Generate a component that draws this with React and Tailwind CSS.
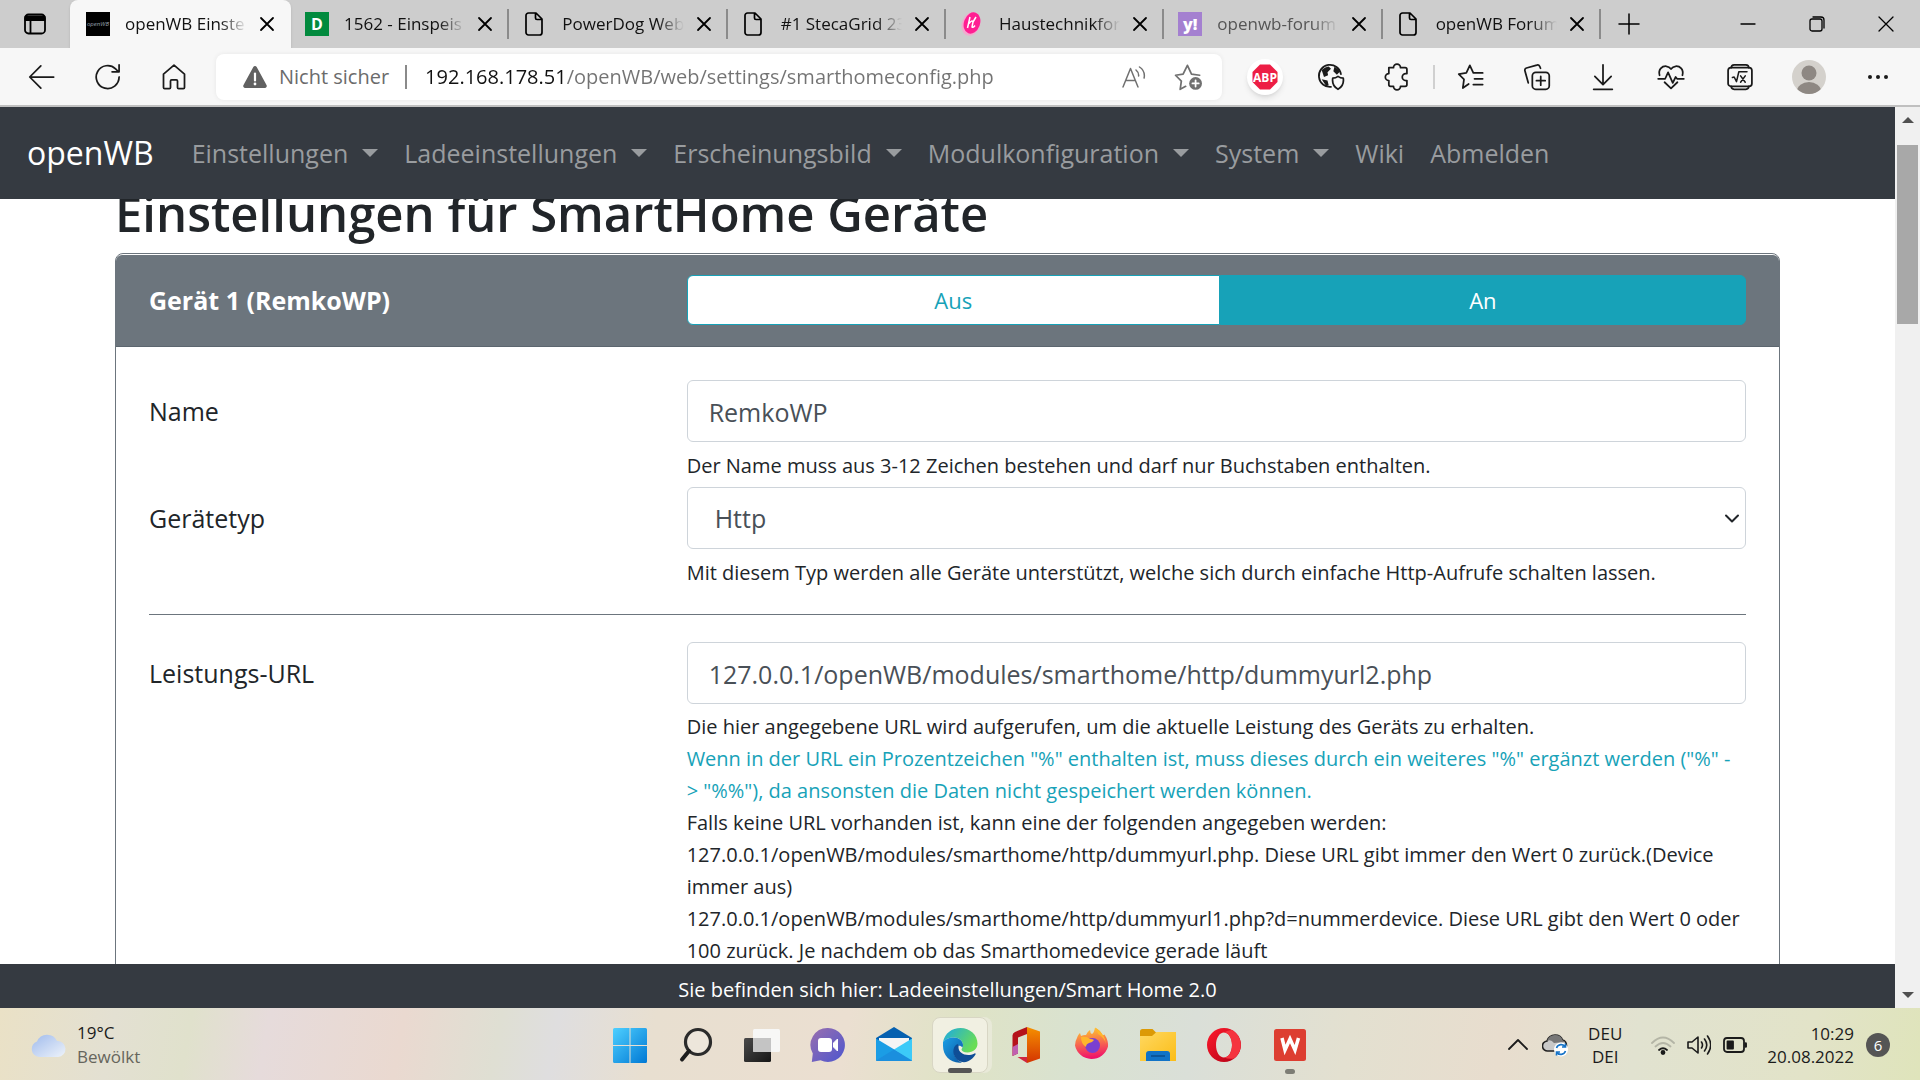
import React, { useState } from 'react';

const tabs = [
  { title: 'openWB Einste', icon: 'openwb', active: true },
  { title: '1562 - Einspeis', icon: 'd' },
  { title: 'PowerDog Web', icon: 'page' },
  { title: '#1 StecaGrid 23', icon: 'page' },
  { title: 'Haustechnikfor', icon: 'haus' },
  { title: 'openwb-forum', icon: 'yahoo', dim: true },
  { title: 'openWB Forum', icon: 'page' },
];

const navItems = [
  { label: 'Einstellungen', dropdown: true },
  { label: 'Ladeeinstellungen', dropdown: true },
  { label: 'Erscheinungsbild', dropdown: true },
  { label: 'Modulkonfiguration', dropdown: true },
  { label: 'System', dropdown: true },
  { label: 'Wiki' },
  { label: 'Abmelden' },
];

function Icon({ children, className = 'size-6', width = 1.5, viewBox = '0 0 24 24' }) {
  return (
    <svg className={className} viewBox={viewBox} fill="none" stroke="currentColor" strokeWidth={width} strokeLinecap="round" strokeLinejoin="round" aria-hidden="true">
      {children}
    </svg>
  );
}

function Favicon({ icon }) {
  if (icon === 'openwb') {
    return (
      <span className="flex size-6 shrink-0 items-center justify-center bg-black text-[6px] text-gray-400 italic">openWB</span>
    );
  }
  if (icon === 'd') {
    return <span className="flex size-6 shrink-0 items-center justify-center bg-[#028a3e] text-base font-bold text-white">D</span>;
  }
  if (icon === 'yahoo') {
    return <span className="flex size-6 shrink-0 items-center justify-center bg-[#a480d0] text-base font-extrabold text-white">y!</span>;
  }
  if (icon === 'haus') {
    return (
      <svg className="size-6 shrink-0" viewBox="0 0 24 24" aria-hidden="true">
        <ellipse cx="11" cy="12" rx="9" ry="12" fill="#f4a9cf" transform="rotate(20 11 12)" />
        <ellipse cx="12" cy="11" rx="8" ry="11" fill="#ff1f92" transform="rotate(20 12 11)" />
        <path d="M10 5 7.500 16M9 11.500q3-4 4-1.500l-1 5q1 1 3-1.500M16 5l-3 5" stroke="#fff" strokeWidth="1.500" fill="none" />
      </svg>
    );
  }
  return (
    <Icon className="size-6 shrink-0" width={1.7}>
      <path d="M5.500 1h7.500l6 6v13.500a2.500 2.500 0 0 1-2.500 2.500h-11A2.500 2.500 0 0 1 3 20.500v-17A2.500 2.500 0 0 1 5.500 1ZM12.500 1.200V6A1.500 1.500 0 0 0 14 7.500h5" />
    </Icon>
  );
}

function TabStrip() {
  return (
    <div className="flex h-12 items-center bg-[#cdcdcd]">
      <button type="button" aria-label="Tabaktionen" className="flex h-12 w-[70px] shrink-0 items-center justify-center">
        <Icon className="size-6" width={1.8}>
          <rect x="2" y="2.500" width="20" height="19" rx="3.500" />
          <path d="M2.500 4.500h19v3.500h-19z" fill="currentColor" />
          <path d="M7.500 8v13" />
        </Icon>
      </button>
      <div className="flex max-w-[1531px] flex-1 items-center">
        {tabs.map((tab) => (
          <div
            key={tab.title}
            className={
              tab.active
                ? 'flex h-12 w-[221px] shrink-0 items-center rounded-t-lg bg-[#f7f7f7] pr-3 pl-4 shadow-sm'
                : 'flex h-[30px] min-w-0 flex-1 items-center border-r-2 border-[#8b8b8b] pr-[10px] pl-[14px]'
            }
          >
            <Favicon icon={tab.icon} />
            <span
              className={
                (tab.dim ? 'text-[#555]' : 'text-[#111]') +
                ' ml-[15px] min-w-0 flex-1 text-[17px] leading-6 whitespace-nowrap [mask-image:linear-gradient(to_right,black_78%,transparent)]'
              }
            >
              {tab.title}
            </span>
            <button type="button" aria-label={tab.title + ' schließen'} className="ml-2 flex size-6 shrink-0 items-center justify-center">
              <Icon className="size-6" width={1.8}>
                <path d="m6 6 12 12M18 6 6 18" />
              </Icon>
            </button>
          </div>
        ))}
      </div>
      <button type="button" aria-label="Neuer Tab" className="flex h-12 w-14 shrink-0 items-center justify-center">
        <Icon className="size-6">
          <path d="M2 12h20M12 2v20" />
        </Icon>
      </button>
      <div className="ml-auto flex h-full items-center">
        <button type="button" aria-label="Minimieren" className="flex w-[69px] justify-center">
          <Icon className="size-4" width={1.3} viewBox="0 0 16 16"><path d="M1 8h14" /></Icon>
        </button>
        <button type="button" aria-label="Verkleinern" className="flex w-[69px] justify-center">
          <Icon className="size-4" width={1.3} viewBox="0 0 16 16">
            <rect x="1" y="3" width="12" height="12" rx="2" />
            <path d="M4 1h8a3 3 0 0 1 3 3v8" />
          </Icon>
        </button>
        <button type="button" aria-label="Schließen" className="flex w-[69px] justify-center">
          <Icon className="size-4" width={1.3} viewBox="0 0 16 16"><path d="m1 1 14 14M15 1 1 15" /></Icon>
        </button>
      </div>
    </div>
  );
}

function ToolButton({ label, children, className = 'w-[66px]' }) {
  return (
    <button type="button" aria-label={label} className={className + ' flex shrink-0 items-center justify-center'}>
      {children}
    </button>
  );
}

function AddressRow() {
  const [url, setUrl] = useState('192.168.178.51/openWB/web/settings/smarthomeconfig.php');

  return (
    <div className="flex h-[59px] items-center border-b-2 border-[#c0c0c0] bg-[#f7f7f7] px-2 text-[#1a1a1a]">
      <ToolButton label="Zurück" className="w-[67px]">
        <Icon className="size-7"><path d="M22 12H2M11 2.500 1.500 12l9.500 9.500" /></Icon>
      </ToolButton>
      <ToolButton label="Aktualisieren">
        <Icon className="size-7"><path d="M21.500 12A9.800 9.800 0 1 1 18.500 5L21 7.500M21.500 1.500v6h-6" /></Icon>
      </ToolButton>
      <ToolButton label="Startseite">
        <Icon className="size-7"><path d="M3 9.500 12 1.800l9 7.700V21a1 1 0 0 1-1 1h-4a1 1 0 0 1-1-1v-5.500a1 1 0 0 0-1-1h-4a1 1 0 0 0-1 1V21a1 1 0 0 1-1 1H4a1 1 0 0 1-1-1Z" /></Icon>
      </ToolButton>

      <div className="ml-[9px] flex h-[46px] flex-1 items-center rounded-lg bg-white pr-5 pl-[26px] shadow-[0_0_5px_rgba(0,0,0,0.07)]">
        <svg className="h-6 w-[26px]" viewBox="0 0 26 24" aria-hidden="true">
          <path d="M11.300 2a2 2 0 0 1 3.400 0l9.800 18a2 2 0 0 1-1.700 3H3.200a2 2 0 0 1-1.700-3Z" fill="#616161" />
          <path d="M13 8.500v7" stroke="#fff" strokeWidth="2.200" strokeLinecap="round" />
          <circle cx="13" cy="19" r="1.400" fill="#fff" />
        </svg>
        <span className="ml-[11px] text-xl text-[#6b6b6b]">Nicht sicher</span>
        <span className="mr-[18px] ml-4 h-6 w-[2px] bg-[#8a8a8a]" />
        <input
          aria-label="Adresse"
          value={url}
          onChange={(e) => setUrl(e.target.value)}
          className="flex-1 bg-linear-to-r from-[#111] from-[138px] to-[#737373] to-[138px] bg-clip-text text-xl text-transparent outline-none"
        />
        <div className="flex items-center gap-7 text-[#707070]">
          <button type="button" aria-label="Laut vorlesen">
            <Icon className="size-6"><path d="M1 22 8.500 3.500 16 22M3.800 15.500h9.400M14 5q3 2.500 2.600 6M17.500 2q6 4 4.600 11" /></Icon>
          </button>
          <button type="button" aria-label="Zu Favoriten hinzufügen">
            <Icon className="size-7">
              <path d="m10 20-4.700 2.500 1-7L1.300 10.500l6.500-1L11.500 2l3.500 7.500 7 1" />
              <circle cx="18.500" cy="17.500" r="5.500" fill="currentColor" stroke="none" />
              <path d="M18.500 14.800v5.400M15.800 17.500h5.400" stroke="#fff" />
            </Icon>
          </button>
        </div>
      </div>

      <ToolButton label="Adblock Plus" className="ml-[10px] w-[66px]">
        <span className="flex size-9 items-center justify-center rounded-full bg-white shadow-md">
          <svg className="size-7" viewBox="0 0 28 28" aria-hidden="true">
            <path d="M9 1.500h10L26.500 9v10L19 26.500H9L1.500 19V9Z" fill="#ed1e45" />
            <text x="14" y="18.500" textAnchor="middle" fontSize="12" fontWeight="700" fill="#fff">ABP</text>
          </svg>
        </span>
      </ToolButton>
      <ToolButton label="Datenschutz">
        <Icon className="size-7">
          <path d="M12 20.500a9.500 9.500 0 1 1 8.500-11" />
          <path d="M4 6q3-3 6-3l2 2-3 3 .5 2.500L6 12ZM15 3l5 4-3 3-3-3ZM4 14l5 1 1 4-2 1Z" fill="currentColor" stroke="none" />
          <path d="M18 11.500q2 1.500 4.500 1.500 1 6.500-4.500 9.500-5.500-3-4.500-9.500 2.500 0 4.500-1.500Z" fill="#f7f7f7" />
        </Icon>
      </ToolButton>
      <ToolButton label="Erweiterungen">
        <Icon className="size-7"><path d="M5 4h4a3 3 0 0 1 6 0h4a1.500 1.500 0 0 1 1.500 1.500V9h-1a3 3 0 0 0 0 6h1v3.500A1.500 1.500 0 0 1 19 20h-4a3 3 0 0 1-6 0H6.500A1.500 1.500 0 0 1 5 18.500V15a3 3 0 0 1 0-6Z" /></Icon>
      </ToolButton>
      <span className="mx-[3px] h-6 w-[2px] bg-[#d0d0d0]" />
      <ToolButton label="Favoriten">
        <Icon className="size-7"><path d="m10 18-5 3.500 1-7.500L1.500 9.500 8 8.500 11 2l3 6.500h8M15 13.500h7M14 18.500h8" /></Icon>
      </ToolButton>
      <ToolButton label="Sammlungen">
        <Icon className="size-7">
          <rect x="8" y="8" width="14.500" height="14.500" rx="3" />
          <path d="M15.200 11.500v7.500M11.500 15.200H19M15 4.500l-.7-1.700a2 2 0 0 0-2.500-1L3 4.300a2 2 0 0 0-1.300 2.600L4.500 17" />
        </Icon>
      </ToolButton>
      <ToolButton label="Downloads">
        <Icon className="size-7"><path d="M12 1.500V18M5 11.500l7 7 7-7M4 22.500h16" /></Icon>
      </ToolButton>
      <ToolButton label="Leistung" className="w-[69px]">
        <Icon className="size-7">
          <path d="M2.200 10.500C.8 5.500 4.500 2.500 8 2.800q2.500.2 4 2.400 1.500-2.200 4-2.400c3.500-.3 7.200 2.700 5.800 7.700M6.500 16.500l5.500 5.300 5.500-5.300" />
          <path d="M1 13.500h6l2.500-5.500 4 9 2.500-5 1.200 1.500H23" />
        </Icon>
      </ToolButton>
      <ToolButton label="Mathematik" className="w-[69px]">
        <Icon className="size-7">
          <rect x="1.800" y="4" width="20.400" height="16" rx="2.500" />
          <path d="M4.500 4q0-2.500 2.500-2.500h10Q19.500 1.500 19.500 4M4.500 20q0 2.500 2.500 2.500h10q2.500 0 2.500-2.500" />
          <path d="m5.500 12.500 1.500-.5 2 4 2-8.500h7M12.500 11l4 5.500M16.500 11l-4 5.500" strokeWidth="1.300" />
        </Icon>
      </ToolButton>
      <ToolButton label="Profil" className="w-[69px]">
        <svg className="size-[34px]" viewBox="0 0 34 34" aria-hidden="true">
          <clipPath id="avatar"><circle cx="17" cy="17" r="17" /></clipPath>
          <g clipPath="url(#avatar)">
            <rect width="34" height="34" fill="#d4d1cc" />
            <circle cx="17" cy="13" r="7.500" fill="#8e8883" />
            <ellipse cx="17" cy="31" rx="12" ry="9" fill="#8e8883" />
          </g>
        </svg>
      </ToolButton>
      <ToolButton label="Einstellungen und mehr" className="w-[69px]">
        <svg className="size-6" viewBox="0 0 24 24" fill="currentColor" aria-hidden="true">
          <circle cx="4" cy="12" r="2" />
          <circle cx="12" cy="12" r="2" />
          <circle cx="20" cy="12" r="2" />
        </svg>
      </ToolButton>
    </div>
  );
}

function Navbar() {
  return (
    <nav className="z-10 flex h-[92px] shrink-0 items-center bg-[#353a41] px-[27px] text-[#999c9f]">
      <a href="#home" className="mr-[38px] text-[32px] leading-10 text-white">openWB</a>
      <div className="flex items-center gap-[26px]">
        {navItems.map((item) => (
          <a key={item.label} href={'#' + item.label} className="flex items-center text-[25px] leading-9">
            {item.label}
            {item.dropdown && (
              <span className="ml-[14px] border-x-8 border-t-8 border-x-transparent border-t-[#999c9f]" />
            )}
          </a>
        ))}
      </div>
    </nav>
  );
}

const inputClass = 'h-[62px] w-full rounded-md border border-[#ced4da] bg-white pt-0.5 text-[25px] text-[#495057] outline-none';

function FormRow({ id, label, children }) {
  return (
    <div className="grid grid-cols-[1fr_2fr] gap-x-2">
      <label htmlFor={id} className="pt-[11px] text-[25px] leading-10">{label}</label>
      <div>{children}</div>
    </div>
  );
}

function DeviceCard() {
  const [enabled, setEnabled] = useState('an');
  const [name, setName] = useState('RemkoWP');
  const [type, setType] = useState('http');
  const [powerUrl, setPowerUrl] = useState('127.0.0.1/openWB/modules/smarthome/http/dummyurl2.php');

  return (
    <section className="rounded-lg border border-[#6c757d] pt-px">
      <header className="grid h-[92px] grid-cols-[1fr_2fr] items-center gap-x-2 rounded-t-md border-b border-[#5c666f] bg-[#6c757d] px-[33px] pb-0.5 text-white">
        <h2 className="text-[25px] leading-9 font-bold">Gerät 1 (RemkoWP)</h2>
        <fieldset className="flex h-[50px] text-[22px] leading-8" aria-label="Gerät 1">
          <label className="flex flex-[534] items-center justify-center rounded-l-md border border-[#17a2b8] bg-white text-[#17a2b8] has-checked:bg-[#17a2b8] has-checked:text-white">
            <input type="radio" name="enabled" className="sr-only" checked={enabled === 'aus'} onChange={() => setEnabled('aus')} />
            Aus
          </label>
          <label className="flex flex-[527] items-center justify-center rounded-r-md border border-[#17a2b8] bg-white text-[#17a2b8] has-checked:bg-[#17a2b8] has-checked:text-white">
            <input type="radio" name="enabled" className="sr-only" checked={enabled === 'an'} onChange={() => setEnabled('an')} />
            An
          </label>
        </fieldset>
      </header>

      <form className="px-[33px] py-[33px] text-[#212529]">
        <FormRow id="device-name" label="Name">
          <input id="device-name" type="text" value={name} onChange={(e) => setName(e.target.value)} className={inputClass + ' px-[21px]'} />
          <p className="mt-2 mb-[5px] text-xl leading-8">Der Name muss aus 3-12 Zeichen bestehen und darf nur Buchstaben enthalten.</p>
        </FormRow>

        <FormRow id="device-type" label="Gerätetyp">
          <div className="relative">
            <select id="device-type" value={type} onChange={(e) => setType(e.target.value)} className={inputClass + ' appearance-none px-[27px]'}>
              <option value="http">Http</option>
            </select>
            <Icon className="pointer-events-none absolute top-[26px] right-[6px] h-3.5 w-4" width={2} viewBox="0 0 16 14">
              <path d="m2 2.500 6 6 6-6" />
            </Icon>
          </div>
          <p className="mt-2 mb-[5px] text-xl leading-8">Mit diesem Typ werden alle Geräte unterstützt, welche sich durch einfache Http-Aufrufe schalten lassen.</p>
        </FormRow>

        <hr className="mt-5 mb-[27px] border-[#6c757d]" />

        <FormRow id="power-url" label="Leistungs-URL">
          <input id="power-url" type="text" value={powerUrl} onChange={(e) => setPowerUrl(e.target.value)} className={inputClass + ' px-[21px]'} />
          <div className="mt-[7px] text-xl leading-8">
            <p>Die hier angegebene URL wird aufgerufen, um die aktuelle Leistung des Geräts zu erhalten.</p>
            <p className="text-[#17a2b8]">
              Wenn in der URL ein Prozentzeichen "%" enthalten ist, muss dieses durch ein weiteres "%" ergänzt werden ("%" -<br />&gt; "%%"), da ansonsten die Daten nicht gespeichert werden können.
            </p>
            <p>Falls keine URL vorhanden ist, kann eine der folgenden angegeben werden:</p>
            <p>127.0.0.1/openWB/modules/smarthome/http/dummyurl.php. Diese URL gibt immer den Wert 0 zurück.(Device immer aus)</p>
            <p>127.0.0.1/openWB/modules/smarthome/http/dummyurl1.php?d=nummerdevice. Diese URL gibt den Wert 0 oder 100 zurück. Je nachdem ob das Smarthomedevice gerade läuft</p>
          </div>
        </FormRow>
      </form>
    </section>
  );
}

function Scrollbar() {
  return (
    <div className="flex w-[25px] shrink-0 flex-col items-center bg-[#f0f0f0] py-[10px]">
      <span className="border-x-[6px] border-b-[6px] border-x-transparent border-b-[#505050]" />
      <span className="mt-[22px] h-[179px] w-[21px] bg-[#a8a8a8]" />
      <span className="mt-auto border-x-[6px] border-t-[6px] border-x-transparent border-t-[#505050]" />
    </div>
  );
}

function Grad({ id, from, to, x2 = 1, y2 = 1 }) {
  return (
    <linearGradient id={id} x1="0" y1="0" x2={x2} y2={y2}>
      <stop offset="0" stopColor={from} />
      <stop offset="1" stopColor={to} />
    </linearGradient>
  );
}

const apps = [
  {
    name: 'Start',
    art: (
      <>
        <Grad id="win" from="#4fd0ff" to="#0078d4" />
        <path d="M1 2.500A1.500 1.500 0 0 1 2.500 1h15v17H1ZM18.500 1h15A1.500 1.500 0 0 1 35 2.500V18H18.500ZM1 19h16.500v17h-15A1.500 1.500 0 0 1 1 34.500ZM18.500 19H35v15.500a1.500 1.500 0 0 1-1.500 1.500h-15Z" fill="url(#win)" />
      </>
    ),
  },
  {
    name: 'Suche',
    art: (
      <>
        <circle cx="20" cy="15" r="12.500" fill="#f2eee6" fillOpacity=".5" stroke="#2b2b2b" strokeWidth="3.200" />
        <path d="M11 24 4 32.500" stroke="#1d1d1d" strokeWidth="4" strokeLinecap="round" />
      </>
    ),
  },
  {
    name: 'Taskansicht',
    art: (
      <>
        <Grad id="task" from="#4a4a4a" to="#161616" />
        <rect x="0" y="11" width="27" height="24" rx="1.500" fill="url(#task)" />
        <rect x="9" y="2" width="27" height="23" rx="1.500" fill="#f8f8f8" fillOpacity=".95" />
        <path d="M9 11h18v14H10.500A1.500 1.500 0 0 1 9 23.500Z" fill="#c4c4c4" />
      </>
    ),
  },
  {
    name: 'Chat',
    art: (
      <>
        <Grad id="chat" from="#9a6fae" to="#4d56cf" />
        <path d="M18 1a17 17 0 1 1-7.500 32.300L1.800 35l1-8.500A17 17 0 0 1 18 1Z" fill="url(#chat)" />
        <rect x="8" y="11" width="14" height="14" rx="3" fill="#fff" />
        <path d="m23.500 16 4-4v12l-4-4Z" fill="#fff" stroke="#fff" strokeLinejoin="round" />
      </>
    ),
  },
  {
    name: 'Mail',
    art: (
      <>
        <path d="M0 11 18 0l18 11v4H0Z" fill="#0560b0" />
        <path d="M3 11h30v13H3Z" fill="#f5f5f5" />
        <path d="M0 11.500 20 23.500 36 34H1.500A1.500 1.500 0 0 1 0 32.500Z" fill="#1b9de5" />
        <path d="M36 11.500V33q0 1-1 1L18 22.500Z" fill="#3ccaf8" />
        <path d="M0 33.500 18 22.500 36 33.500q-.5.500-1 .5H1q-.6 0-1-.5Z" fill="#1a8fde" />
      </>
    ),
  },
  {
    name: 'Microsoft Edge',
    active: true,
    art: (
      <>
        <Grad id="edgeTop" from="#1ba9e6" to="#69dd55" y2={0.5} />
        <Grad id="edgeLeft" from="#1b9fe6" to="#0c59a4" />
        <path d="M1 15C3 6 10 1 18.500 1 28 1 35.500 8 35.500 16.500c0 5.500-4.500 9-10 9-4 0-6-1.500-6-3 0-1 1.500-1.500 1.500-4.500C21 14 17 10.500 12 10.500 7 10.500 3 12.500 1 15Z" fill="url(#edgeTop)" />
        <path d="M1 15c2-3 6-4.500 10.500-4.500 5.500 0 9.500 3.500 9.500 7.500 0 1-.2 1.800-.6 2.500C18 17 12 19 12 25c0 5 3.500 9 8 10.500C9 37 1 29 1 19Z" fill="url(#edgeLeft)" />
        <path d="M15.500 17c-4 2-5 7-3.500 11 2.500 6.500 9 8.500 14 6.300 3-1.300 6-4 7.500-6.800.5-1-.3-1.500-1-1-8 4-16-.5-16-6 0-1.500.5-2.500-1-3.500Z" fill="#0f4e96" />
      </>
    ),
  },
  {
    name: 'Office',
    art: (
      <>
        <Grad id="office" from="#f59000" to="#d43402" x2={0} />
        <path d="M19 0l13 4.500v27L19 36Z" fill="url(#office)" />
        <path d="M19 0v7l-9 3.500v16L4.500 29V8.500Q4.500 6 7 5Z" fill="#b5121b" />
        <path d="M4.500 20 10 17v9.500L4.500 29Z" fill="#c05fb0" />
        <path d="M9.500 30H19v6Z" fill="#d0263f" />
      </>
    ),
  },
  {
    name: 'Firefox',
    art: (
      <>
        <Grad id="fox" from="#ffcf2d" to="#f0136b" x2={0.1} />
        <path d="M3 11c1-3 2-4 3-5l1 3q3-1.500 5-1 1-3 4-5 0 3 2 4 2-1 3-6.500 6 3 7.500 8l2-1q4 6 3.500 12A17 17 0 0 1 1 18.500Q1 14 3 11Z" fill="url(#fox)" />
        <circle cx="18.500" cy="18.500" r="7.500" fill="#7a3fd0" />
        <path d="M7 10q6-1 9 2 3 0 4 1-2 3-5 3-3 1-3 4-5-3-5-10ZM22 1q9 6 10 16-2-7-8-10Z" fill="#ffb62c" />
      </>
    ),
  },
  {
    name: 'Explorer',
    art: (
      <>
        <Grad id="folder" from="#ffd861" to="#fbbd17" />
        <path d="M0 4.500A2.500 2.500 0 0 1 2.500 2h10l4 4-4 5H0Z" fill="#dc9a06" />
        <path d="M0 9h12l4.500-4H36v29H0Z" fill="url(#folder)" />
        <path d="M6 34V27a3 3 0 0 1 3-3h18a3 3 0 0 1 3 3v7Z" fill="#1173c7" />
        <path d="M11 29h14" stroke="#0a4c8c" strokeWidth="1.500" />
      </>
    ),
  },
  {
    name: 'Opera',
    art: (
      <>
        <Grad id="opera" from="#ff1b2d" to="#b00015" />
        <path fillRule="evenodd" d="M18 1a17 17 0 1 1 0 34 17 17 0 0 1 0-34Zm0 4.500c-4.500 0-8 5.500-8 12.500s3.500 12.500 8 12.500S26 25 26 18 22.500 5.500 18 5.500Z" fill="url(#opera)" />
        <path d="M18 30.500C22.500 30.500 26 25 26 18S22.500 5.500 18 5.500q3-2.500 8-2.500a17 17 0 0 1 2 28.500q-5 1-10-1Z" fill="#f5343f" />
      </>
    ),
  },
  {
    name: 'WPS Office',
    running: true,
    art: (
      <>
        <rect x="2" y="2" width="32" height="32" rx="2.500" fill="#dd3e31" />
        <path d="m10 11 3 12 5-11 5 11 3.500-12" fill="none" stroke="#fff" strokeWidth="3.500" />
      </>
    ),
  },
];

function Taskbar() {
  return (
    <footer className="grid h-[72px] shrink-0 grid-cols-[1fr_auto_1fr] items-center bg-[linear-gradient(100deg,#eae1c6_0%,#e3e0d2_6%,#e0e1cc_10%,#e6dbdb_14%,#ead9d0_21%,#dfdfd3_26%,#dfdedf_29%,#e8dfd0_34%,#ebdfd1_44%,#dfe3c6_50%,#d9e2d0_56%,#dadfd8_62%,#e3e0d0_70%,#e8ddce_78%,#e1e2d0_85%,#e2e3c8_94%,#dfe4bb_100%)] pt-0.5 text-[#1b1b1b]">
      <div className="flex items-center pl-[30px]">
        <svg className="h-6 w-9" viewBox="0 0 36 24" aria-hidden="true">
          <Grad id="cloud" from="#a0bbec" to="#eef3fa" />
          <path d="M9 24A8 8 0 0 1 7 8.500a11 11 0 0 1 20-.5A8 8 0 0 1 28 24Z" fill="url(#cloud)" />
        </svg>
        <div className="ml-[11px] text-[17px] leading-6">
          <p>19°C</p>
          <p className="text-[#66655c]">Bewölkt</p>
        </div>
      </div>

      <div className="flex items-center gap-2.5">
        {apps.map((app) => (
          <button
            key={app.name}
            type="button"
            aria-label={app.name}
            className={
              (app.active ? 'rounded-lg border border-[#d8d6c4] bg-[#f1f0e2] shadow-[4px_0_0_#e8e9d8]' : '') +
              ' relative flex size-14 items-center justify-center'
            }
          >
            <svg className="size-9" viewBox="0 0 36 36" aria-hidden="true">{app.art}</svg>
            {app.active && <span className="absolute -bottom-px h-[5px] w-6 rounded-full bg-[#555]" />}
            {app.running && <span className="absolute -bottom-px h-[5px] w-2.5 rounded-full bg-[#7d7d75]" />}
          </button>
        ))}
      </div>

      <div className="flex items-center justify-end pr-[30px] text-[17px] leading-[23px]">
        <Icon className="mr-3.5 h-5 w-5" width={1.8} viewBox="0 0 20 20"><path d="m1 14 9-9 9 9" /></Icon>
        <svg className="mr-5 h-6 w-[26px]" viewBox="0 0 26 24" aria-hidden="true">
          <path d="M6 18a5 5 0 0 1-1-10q2-6 8-6 6 0 7.500 5 4 1 4 5.500 0 5-5 5.500Z" fill="#c9c9c9" stroke="#222" strokeWidth="1.600" />
          <path d="M5 8q4-2 7 2l11-1-2.500-2Q19 2 13 2 7 2 5 8Z" fill="#777" />
          <circle cx="19" cy="16.500" r="7" fill="#fff" />
          <path d="M14.500 15a5 5 0 0 1 9-1M23.500 18a5 5 0 0 1-9 1M23.500 10.500V14H20M14.500 22.500V19H18" stroke="#1673c7" strokeWidth="1.600" fill="none" />
        </svg>
        <div className="mr-[29px] text-center">
          <p>DEU</p>
          <p>DEI</p>
        </div>
        <Icon className="mr-3 size-6" width={1.8}>
          <path d="M1 10q11-11 22 0M4.500 13.500q7.500-7 15 0" stroke="#b4b5a6" />
          <path d="M8 17q4-3.500 8 0" />
          <circle cx="12" cy="19.500" r="1.500" fill="currentColor" />
        </Icon>
        <Icon className="mr-3 size-6" width={1.6}>
          <path d="M1 9v6h4l6 5V4L5 9ZM14.500 9q2 3 0 6M17.500 6q4.500 6 0 12M20.500 3q6.500 9 0 18" />
        </Icon>
        <Icon className="mr-5 size-6" width={1.8}>
          <rect x="1" y="5" width="20" height="14" rx="3" />
          <path d="M4.500 8.500H10v7H4.500z" fill="currentColor" />
          <path d="M22.700 10.500v3" strokeWidth="2.500" />
        </Icon>
        <div className="mr-3 text-right">
          <p>10:29</p>
          <p>20.08.2022</p>
        </div>
        <span className="flex size-6 items-center justify-center rounded-full bg-[#555] text-[15px] text-white">6</span>
      </div>
    </footer>
  );
}

export default function App() {
  return (
    <div className="flex h-screen flex-col overflow-hidden bg-white font-['Open_Sans','Noto_Sans',sans-serif]">
      <TabStrip />
      <AddressRow />
      <div className="flex min-h-0 flex-1">
        <div className="flex min-w-0 flex-1 flex-col">
          <Navbar />
          <main className="min-h-0 flex-1 overflow-hidden px-[115px] text-[#212529]">
            <h1 className="-mt-[15px] mb-[11px] text-[49px] leading-[58px] font-semibold">Einstellungen für SmartHome Geräte</h1>
            <DeviceCard />
          </main>
          <div className="flex h-11 shrink-0 items-center justify-center bg-[#353a41] pt-2 text-xl text-white">
            Sie befinden sich hier: Ladeeinstellungen/Smart Home 2.0
          </div>
        </div>
        <Scrollbar />
      </div>
      <Taskbar />
    </div>
  );
}
